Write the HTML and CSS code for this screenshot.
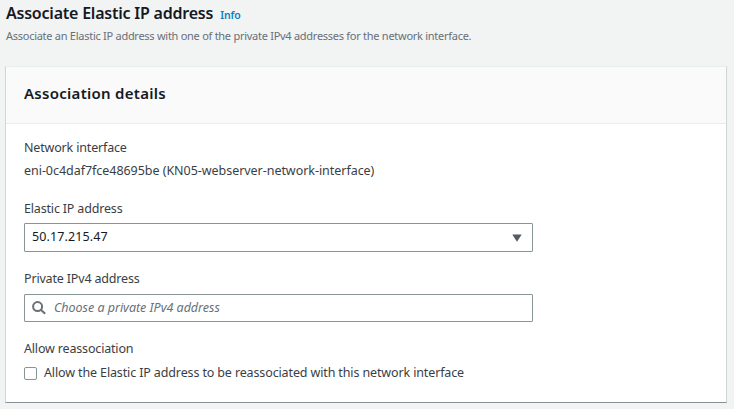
FILE: index.html
```html
<!DOCTYPE html>
<html lang="en">
<head>
<meta charset="utf-8">
<title>Associate Elastic IP address</title>
<link rel="stylesheet" href="styles.css">
</head>
<body>
<header class="page-header">
  <h1><span class="title">Associate Elastic IP address</span><a class="info">Info</a></h1>
  <p>Associate an Elastic IP address with one of the private IPv4 addresses for the network interface.</p>
</header>
<main class="card">
  <div class="card-header"><h2>Association details</h2></div>
  <div class="card-body">
    <div class="field field-text">
      <div class="label">Network interface</div>
      <div class="value">eni-0c4daf7fce48695be (KN05-webserver-network-interface)</div>
    </div>
    <div class="field field-select">
      <div class="label">Elastic IP address</div>
      <div class="control"><span class="ip">50.17.215.47</span>
        <svg class="caret" viewBox="0 0 10 8"><path d="M0.3 0.5h9.4L5 7.8z"/></svg>
      </div>
    </div>
    <div class="field">
      <div class="label">Private IPv4 address</div>
      <div class="control search">
        <svg class="glass" viewBox="0 0 14 14"><circle cx="5.6" cy="5.6" r="4.5"/><path d="M8.8 8.8l4.4 4"/></svg>
        <span class="placeholder">Choose a private IPv4 address</span>
      </div>
    </div>
    <div class="field">
      <div class="label">Allow reassociation</div>
      <label class="check"><span class="box"></span><span class="check-text">Allow the Elastic IP address to be reassociated with this network interface</span></label>
    </div>
  </div>
</main>
</body>
</html>
```
FILE: styles.css
```css
* { box-sizing: border-box; }
body {
  margin: 0;
  height: 409px;
  overflow: hidden;
  padding: 3px 7px 0 5px;
  background: #f2f3f3;
  color: #3a3e44;
  font: 12.5px/20px "Noto Sans", "Open Sans", sans-serif;
  white-space: nowrap;
}
h1, h2, p { margin: 0; }
.page-header { height: 63px; padding-left: 1px; }
h1 { display: flex; align-items: baseline; font-size: 16px; font-weight: 600; line-height: 20px; letter-spacing: -0.22px; color: #16191f; }
.info { margin-left: 7px; font-size: 10.5px; font-weight: 600; letter-spacing: -0.1px; color: #0a7fc4; }
.page-header p { margin-top: 2px; font-size: 11px; line-height: 18px; color: #687078; letter-spacing: -0.27px; }
.card { height: 337px; background: #fff; border: 1px solid #d0d6d6; border-top-color: #eaeded; border-bottom-color: #879196; }
.card-header { height: 57px; padding: 16px 18px; background: #fafafa; border-bottom: 1px solid #eaeded; }
h2 { font-size: 15px; line-height: 20px; font-weight: 600; letter-spacing: 0.28px; color: #16191f; }
.card-body { display: grid; gap: 17px; padding: 14px 18px 0; }
.field-text { height: 44px; }
.label { height: 20px; margin-bottom: 5px; letter-spacing: -0.17px; }
.field-text .label { margin-bottom: 3px; }
.value { letter-spacing: -0.04px; }
.control { display: flex; align-items: center; width: 509px; height: 28px; padding: 0 10px 1px 7px; border: 1px solid #879596; border-radius: 1px; }
.field-select .label { margin-bottom: 4px; }
.field-select .control { height: 29px; }
.ip { letter-spacing: 0.12px; color: #16191f; }
.caret { width: 10px; height: 8px; margin: 2px 0 0 auto; fill: #545b64; }
.glass { width: 14px; height: 14px; margin-top: 1px; fill: none; stroke: #687078; stroke-width: 2; }
.placeholder { margin-left: 8px; font-style: italic; letter-spacing: -0.02px; color: #687078; }
.check { display: flex; align-items: center; margin-top: -1px; }
.box { width: 13px; height: 13px; margin-right: 7px; border: 1px solid #879596; border-radius: 2px; }
.check-text { letter-spacing: -0.13px; }
```
